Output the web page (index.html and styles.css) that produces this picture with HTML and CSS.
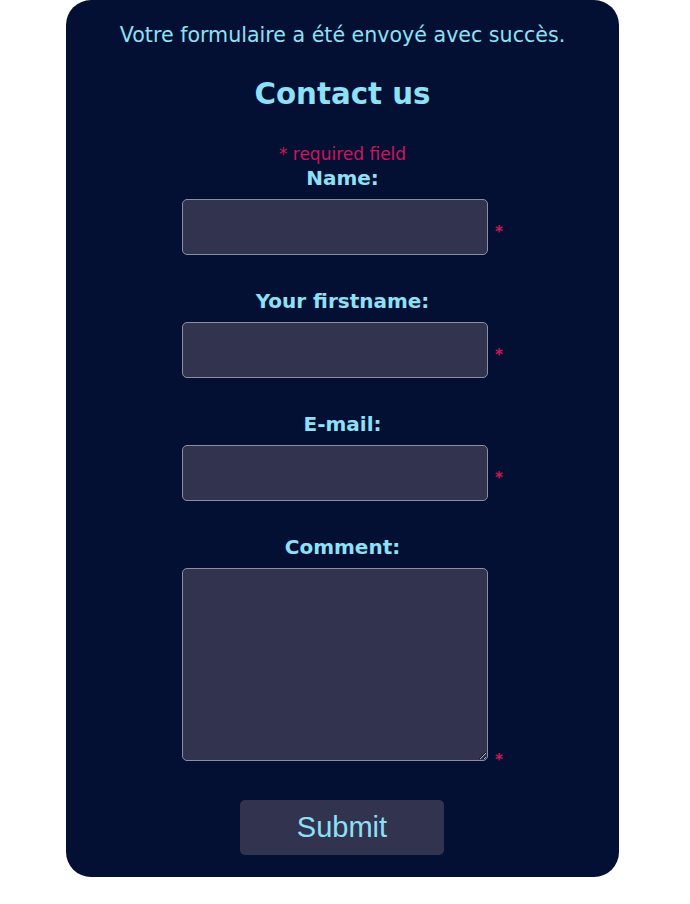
FILE: index.html
```html
<!DOCTYPE html>
<html lang="fr">
<head>
<meta charset="utf-8">
<title>Contact us</title>
<link rel="stylesheet" href="styles.css">
</head>
<body>
<div class="card">
  <p class="msg">Votre formulaire a été envoyé avec succès.</p>
  <h1 class="title">Contact us</h1>
  <p class="required">* required field</p>
  <form class="form">
    <label class="label first" for="name">Name:</label>
    <div class="field"><input class="input" id="name" type="text"> <span class="req">*</span></div>
    <label class="label" for="firstname">Your firstname:</label>
    <div class="field"><input class="input" id="firstname" type="text"> <span class="req">*</span></div>
    <label class="label" for="email">E-mail:</label>
    <div class="field"><input class="input" id="email" type="email"> <span class="req">*</span></div>
    <label class="label" for="comment">Comment:</label>
    <div class="field"><textarea class="input area" id="comment"></textarea> <span class="req">*</span></div>
    <div class="actions"><button class="submit" type="button">Submit</button></div>
  </form>
</div>
</body>
</html>
```

FILE: styles.css
```css
html, body {
  margin: 0;
  padding: 0;
  background: #ffffff;
}

.card {
  width: 553px;
  margin-left: 66px;
  background: #031033;
  border-radius: 25px;
  padding: 23px 0 22px;
  text-align: center;
  font-family: "DejaVu Sans", sans-serif;
  color: #8ee0f7;
  box-sizing: border-box;
}

.msg {
  margin: 0;
  font-size: 20.6px;
  line-height: 24px;
}

.title {
  margin: 29px 0 0;
  font-size: 29.3px;
  line-height: 36px;
  font-weight: bold;
}

.required {
  margin: 32px 0 0;
  font-size: 17px;
  line-height: 20px;
  color: #d0145a;
}

.form {
  margin: 0;
}

.label {
  display: block;
  margin-top: 34px;
  font-size: 20px;
  line-height: 24px;
  font-weight: bold;
}

.label.first {
  margin-top: 2px;
}

.field {
  margin-top: 9px;
  font-size: 16px;
  line-height: 1;
}

.input {
  width: 306px;
  height: 56px;
  box-sizing: border-box;
  background: #31334f;
  border: 1px solid #8c8fa0;
  border-radius: 5px;
  color: #8ee0f7;
  font-family: "DejaVu Sans", sans-serif;
  font-size: 16px;
  vertical-align: baseline;
}

.area {
  height: 193px;
  resize: both;
}

.req {
  color: #d0145a;
  font-size: 15px;
  font-weight: bold;
  line-height: 0;
  margin-left: 2px;
  vertical-align: -4px;
}

.actions {
  margin-top: 36px;
  padding-right: 1px;
}

.submit {
  width: 204px;
  height: 55px;
  background: #31334f;
  border: none;
  border-radius: 5px;
  color: #8ee0f7;
  font-family: "Liberation Sans", Arial, sans-serif;
  font-size: 29px;
  padding: 0;
}
```
